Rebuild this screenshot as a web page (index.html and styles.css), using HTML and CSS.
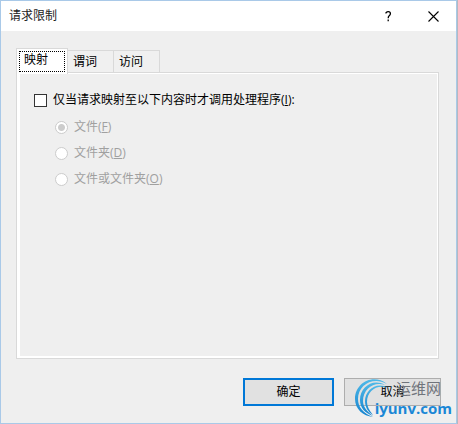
FILE: index.html
```html
<!DOCTYPE html>
<html lang="zh-CN">
<head>
    <meta charset="UTF-8">
    <meta name="viewport" content="width=device-width, initial-scale=1.0">
    <title>请求限制</title>
    <link rel="stylesheet" href="styles.css">
</head>
<body>
    <form class="dialog">
        <div class="title-bar">
            <h1>请求限制</h1>
            <button type="button" class="title-button" aria-label="Help">
                <svg width="7" height="11" viewBox="0 0 7 11"><path d="M1 2.5V1.7Q2 .7 3.3 .7Q5.4 .7 5.4 2.7Q5.4 3.8 4.2 4.8Q3.2 5.6 3.2 7.2M3.2 8.6V10.2" fill="none" stroke="#000" stroke-width="1.3"/></svg>
            </button>
            <button type="button" class="title-button" aria-label="Close">
                <svg width="11" height="11" viewBox="0 0 11 11"><path d="M.5 .5L10.5 10.5M10.5 .5L.5 10.5" stroke="#000" stroke-width="1.1"/></svg>
            </button>
        </div>

        <div class="content">
            <!-- Tabs -->
            <div class="tabs" role="tablist">
                <button type="button" class="tab active" role="tab" aria-selected="true">映射</button>
                <button type="button" class="tab" role="tab">谓词</button>
                <button type="button" class="tab" role="tab">访问</button>
            </div>

            <div class="panel" role="tabpanel">
                <label class="option"><input type="checkbox" name="mapping"> <span>仅当请求映射至以下内容时才调用处理程序(<u>I</u>):</span></label>
                <div class="sub-options">
                    <label class="option"><input type="radio" name="target" checked disabled> <span>文件(<u>F</u>)</span></label>
                    <label class="option"><input type="radio" name="target" disabled> <span>文件夹(<u>D</u>)</span></label>
                    <label class="option"><input type="radio" name="target" disabled> <span>文件或文件夹(<u>O</u>)</span></label>
                </div>
            </div>

            <div class="actions">
                <button type="submit" class="ok">确定</button>
                <button type="button" class="cancel">取消</button>
            </div>
        </div>

        <!-- Site watermark -->
        <div class="watermark">
            <svg width="38" height="42" viewBox="0 0 38 42">
                <defs>
                    <linearGradient id="swirl" x1="0" y1="0" x2="0" y2="1">
                        <stop offset="0" stop-color="#4fb9e8"/>
                        <stop offset="1" stop-color="#1583cf"/>
                    </linearGradient>
                </defs>
                <path d="M33 7C19-4 1 6 1 22C1 32 9 39 19 40C9 36 4 30 4 22C4 8 19-1 33 7Z" fill="url(#swirl)"/>
                <path d="M31 8C19 1 6 10 6 23C6 31 11 36 19 39C13 34 9 30 9 24C9 12 20 4 31 8Z" fill="url(#swirl)"/>
                <path d="M34 11C23 4 11 13 11 24C11 30 14 35 19 38C15 33 13 29 13 25C13 14 23 7 34 11Z" fill="url(#swirl)"/>
            </svg>
            <div class="watermark-text">
                <span class="site-name">运维网</span>
                <span class="site-url">iyunv.com</span>
            </div>
        </div>
    </form>
</body>
</html>
```
FILE: styles.css
```css
* { box-sizing: border-box; }
body {
    margin: 0;
    background: #b4b9bf;
    color: #000;
    font: 12px/16px "Open Sans", "Noto Sans CJK SC", sans-serif;
}
.dialog {
    position: relative;
    display: flex;
    flex-direction: column;
    min-height: 100vh;
    margin-right: 1px;
    border: 1px solid #a9c9e8;
    background: #efefef;
}
button, input { margin: 0; font: inherit; color: inherit; }
button { padding: 0; }

/* Title bar */
.title-bar { display: flex; height: 30px; background: #fff; }
.title-bar h1 { flex: 1; margin: 0; padding: 7px 8px; font: inherit; color: #222; }
.title-button {
    display: flex; align-items: center; justify-content: center;
    width: 45px; border: 0; background: none;
}

.content { flex: 1; display: flex; flex-direction: column; padding: 17px 17px 17px 15px; }

/* Tabs */
.tabs { display: flex; align-items: flex-end; height: 24px; }
.tab {
    width: 47px; height: 22px; margin-left: -1px; padding: 0 5px;
    border: 1px solid #d9d9d9; border-bottom: 0;
    background: #f0f0f0; text-align: left;
}
.tab.active {
    position: relative; z-index: 1;
    width: 52px; height: 26px;
    margin: 0 0 -2px; padding: 0 7px 3px;
    background: #fff;
}
.tab.active::after {
    content: ""; position: absolute; inset: 2px;
    border: 1px dotted #000;
}
.panel {
    flex: 1; padding: 18px 17px;
    border: 1px solid #d9d9d9;
    box-shadow: inset 3px 0 #fff, inset -1px 0 #fff, inset 0 1px #fff, inset 0 -2px #fff;
}

/* Options */
.option { display: flex; align-items: center; gap: 6px; height: 18px; width: max-content; }
.option input {
    appearance: none; width: 13px; height: 13px;
    border: 1px solid #333; background: #fff;
}
.sub-options {
    display: flex; flex-direction: column; gap: 8px;
    padding: 9px 21px; color: #a0a0a0;
}
.sub-options .option input { border-color: #ccc; border-radius: 50%; }
.sub-options .option input:checked { background: radial-gradient(circle, #ccc 3px, #fff 4px); }

/* Buttons */
.actions { display: flex; justify-content: flex-end; gap: 10px; padding-top: 19px; margin-right: -2px; }
.actions button { height: 28px; border: 1px solid #adadad; background: #e1e1e1; }
.actions .ok { width: 91px; border: 2px solid #0078d7; }
.actions .cancel { width: 97px; }

/* Watermark */
.watermark { position: absolute; right: 4px; bottom: 4px; display: flex; pointer-events: none; }
.watermark-text { display: flex; flex-direction: column; margin-left: -17px; }
.site-name { align-self: flex-end; margin-right: 11px; color: #70747b; font-size: 15px; line-height: 22px; }
.site-url { color: #1b87d6; font: bold 15px/18px "Open Sans", sans-serif; }
```
